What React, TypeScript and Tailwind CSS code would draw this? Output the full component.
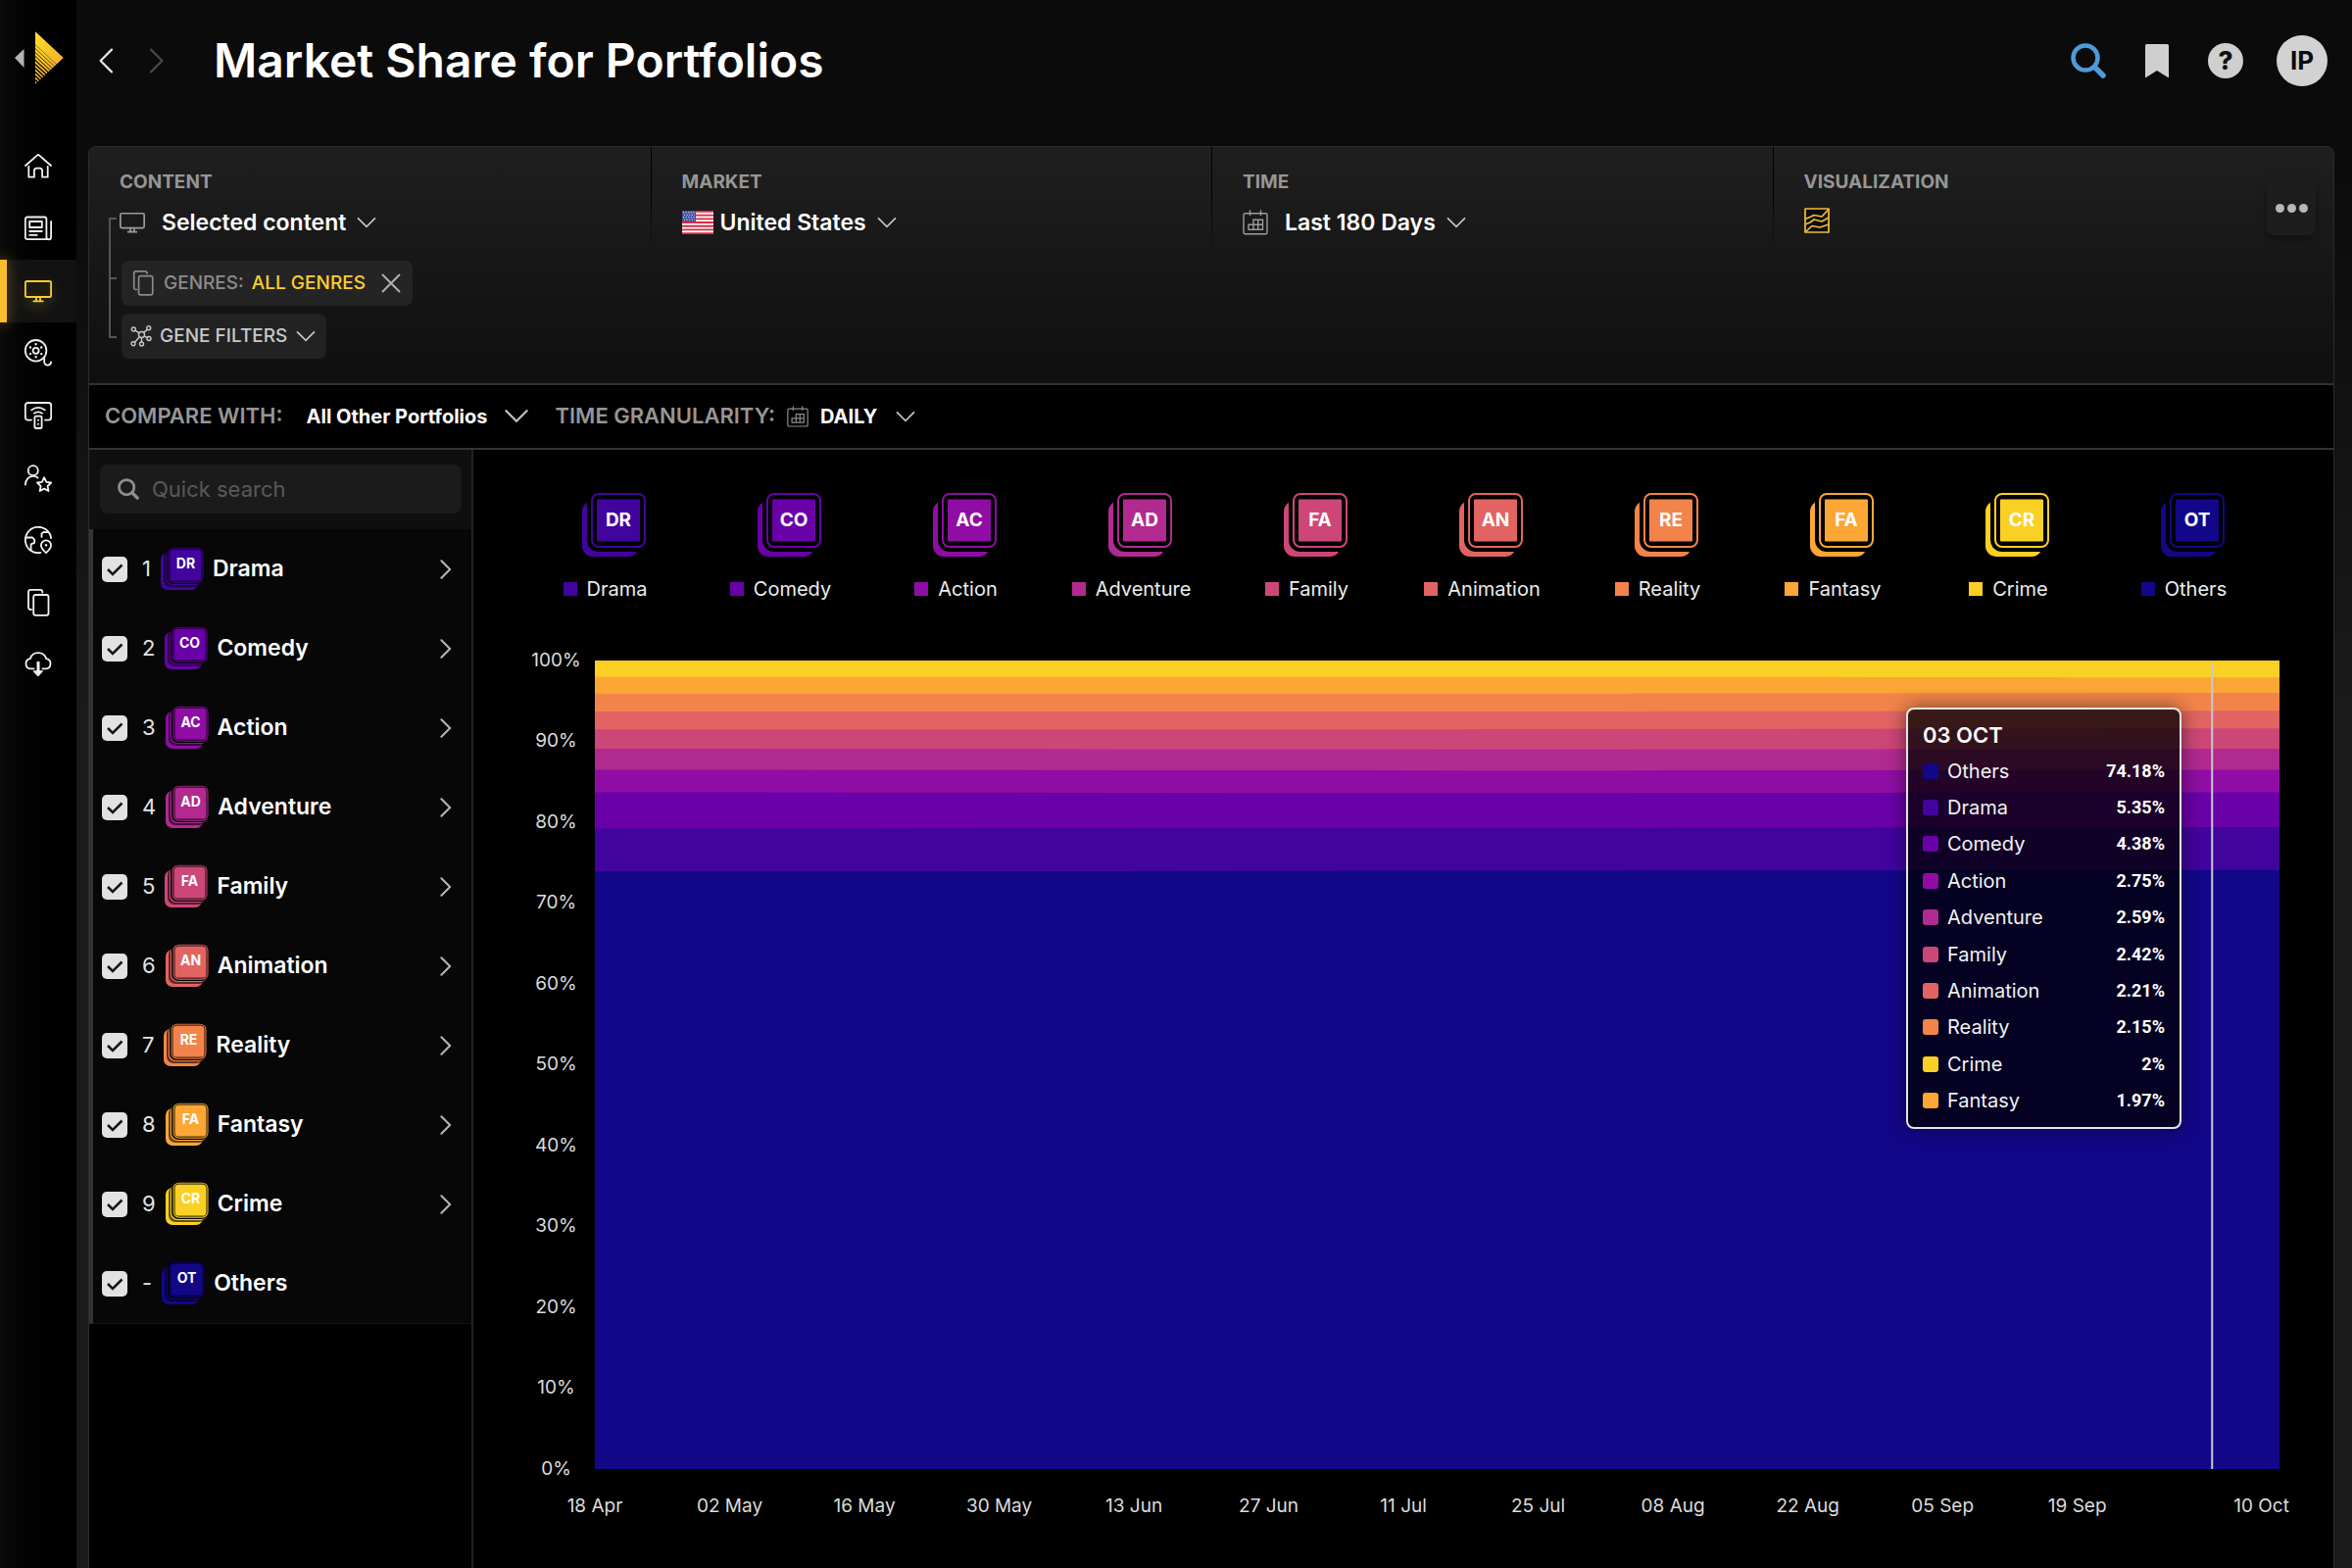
import React from "react";

type Genre = { code: string; name: string; color: string; share: string };

const drama: Genre = { code: "DR", name: "Drama", color: "#41049d", share: "5.35%" };
const comedy: Genre = { code: "CO", name: "Comedy", color: "#6a00a8", share: "4.38%" };
const action: Genre = { code: "AC", name: "Action", color: "#8f0da4", share: "2.75%" };
const adventure: Genre = { code: "AD", name: "Adventure", color: "#b12a90", share: "2.59%" };
const family: Genre = { code: "FA", name: "Family", color: "#cc4778", share: "2.42%" };
const animation: Genre = { code: "AN", name: "Animation", color: "#e16462", share: "2.21%" };
const reality: Genre = { code: "RE", name: "Reality", color: "#f2844b", share: "2.15%" };
const fantasy: Genre = { code: "FA", name: "Fantasy", color: "#fca636", share: "1.97%" };
const crime: Genre = { code: "CR", name: "Crime", color: "#fbd024", share: "2%" };
const others: Genre = { code: "OT", name: "Others", color: "#130789", share: "74.18%" };

const genres = [drama, comedy, action, adventure, family, animation, reality, fantasy, crime, others];
const tooltipRows = [others, drama, comedy, action, adventure, family, animation, reality, crime, fantasy];

// Upper edge of every layer, measured down from 100%: start, middle and end of the period.
const layers: { genre: Genre; top: [number, number, number] }[] = [
  { genre: crime, top: [0, 0, 0] },
  { genre: fantasy, top: [2.0, 2.0, 2.1] },
  { genre: reality, top: [4.1, 4.1, 4.0] },
  { genre: animation, top: [6.3, 6.3, 6.2] },
  { genre: family, top: [8.5, 8.5, 8.4] },
  { genre: adventure, top: [10.9, 11.0, 10.9] },
  { genre: action, top: [13.5, 13.6, 13.5] },
  { genre: comedy, top: [16.3, 16.4, 16.3] },
  { genre: drama, top: [20.8, 20.7, 20.6] },
  { genre: others, top: [26.1, 26.0, 25.9] },
];

const yTicks = ["100%", "90%", "80%", "70%", "60%", "50%", "40%", "30%", "20%", "10%", "0%"];
const xTicks = ["18 Apr", "02 May", "16 May", "30 May", "13 Jun", "27 Jun", "11 Jul", "25 Jul", "08 Aug", "22 Aug", "05 Sep", "19 Sep"];

function LineIcon({ children, className }: { children: React.ReactNode; className?: string }) {
  return (
    <svg
      viewBox="0 0 28 28"
      aria-hidden="true"
      className={className ?? "size-7"}
      fill="none"
      stroke="currentColor"
      strokeWidth="1.8"
      strokeLinecap="round"
      strokeLinejoin="round"
    >
      {children}
    </svg>
  );
}

const Home = () => (
  <LineIcon>
    <path d="M1 13 12.8 2.6a1.8 1.8 0 0 1 2.4 0L27 13" />
    <path d="M4.3 13.8v10.9h5.6v-6.4a2.6 2.6 0 0 1 2.6-2.6h3a2.6 2.6 0 0 1 2.6 2.6v6.4h5.6V13.8" />
  </LineIcon>
);
const News = () => (
  <LineIcon>
    <path d="M24.5 25.2H3a2.2 2.2 0 0 1-2.2-2.2V4.7A2.2 2.2 0 0 1 3 2.5h17.2a2.2 2.2 0 0 1 2.2 2.2V23a2.3 2.3 0 0 0 4.7 0V7" />
    <path d="M5.2 7h12.6v6H5.2zM5.2 17h12.6M5.2 20.8h7.5" />
  </LineIcon>
);
const Monitor = ({ className }: { className?: string }) => (
  <LineIcon className={className}>
    <rect x="0.9" y="4" width="26.2" height="16" rx="1.6" />
    <path d="M12 20v4M16 20v4M9.3 24.4h9.4" />
  </LineIcon>
);
const Reel = () => (
  <LineIcon>
    <circle cx="11.6" cy="11.8" r="10.8" />
    <circle cx="11.6" cy="11.8" r="3" />
    <path strokeWidth="2.4" d="M11.6 5.3v0M11.6 18.3v0M6 8.5v0M17.2 8.5v0M6 15.1v0M17.2 15.1v0" />
    <path d="M20.2 18.8v4.4a3.2 3.2 0 0 0 3.4 3.4c2 0 3.4-1.3 3.5-3.2" />
  </LineIcon>
);
const Remote = () => (
  <LineIcon>
    <path d="M7 18.6H3.5a2.7 2.7 0 0 1-2.7-2.7V3.7A2.7 2.7 0 0 1 3.5 1h21a2.7 2.7 0 0 1 2.7 2.7v12.2a2.7 2.7 0 0 1-2.7 2.7H21" />
    <path d="M7.2 8.4c4.1-3.2 9.5-3.2 13.6 0M10 11.7c2.5-1.7 5.5-1.7 8 0" />
    <rect x="10.4" y="14.6" width="7.2" height="12.4" rx="1.6" />
    <path strokeWidth="2" d="M14 18.8v0M14 22.8v0" />
  </LineIcon>
);
const Talent = () => (
  <LineIcon>
    <circle cx="8.8" cy="6.2" r="5" />
    <path d="M.9 20.5c0-5 3.4-8.6 7.9-8.6 2 0 3.4.5 4.8 1.6" />
    <path d="m20.1 13.2 2.2 4.6 4.9.7-3.6 3.5.9 5-4.4-2.4-4.4 2.4.9-5-3.6-3.5 4.9-.7z" />
  </LineIcon>
);
const Globe = () => (
  <LineIcon>
    <path d="M16.2 27A13.2 13.2 0 1 1 27.1 12" />
    <path d="M1.5 11.5h6.7l2 2.3v3l-3.6 1.5v5.9M24.3 6.2l-4.8-.3-2 1.6v3.4" />
    <path d="M22 27.1c-3-2.8-5.1-5-5.1-7.7a5.1 5.1 0 0 1 10.2 0c0 2.7-2.1 4.9-5.1 7.7z" />
    <path strokeWidth="2.4" d="M22 19.2v0" />
  </LineIcon>
);
const Pages = ({ className }: { className?: string }) => (
  <LineIcon className={className}>
    <rect x="9.2" y="6" width="15.3" height="20.8" rx="2" />
    <path d="M7 21H6a2 2 0 0 1-2-2V2.9A2 2 0 0 1 6 .9h10.3a2 2 0 0 1 2 2V3.5" />
  </LineIcon>
);
const CloudDown = () => (
  <LineIcon>
    <path d="M9.600 18.4H6.200a5.200 5.200 0 0 1-.4-10.300C7 4.500 10.200 2.200 14 2.200s7 2.300 8.200 5.900a5.200 5.200 0 0 1-.4 10.300h-3.400" />
    <path strokeWidth="3" strokeLinecap="butt" d="M14 11v11" />
    <path fill="currentColor" strokeWidth="1" d="M9.5 20.8h9L14 25.8z" />
  </LineIcon>
);
const Gene = () => (
  <svg viewBox="0 0 22 22" aria-hidden="true" className="size-[22px]" fill="none" stroke="currentColor" strokeWidth="1.4">
    <circle cx="11.5" cy="9.5" r="3" />
    <circle cx="3.3" cy="4" r="2" />
    <circle cx="18.7" cy="2.8" r="2" />
    <circle cx="19" cy="13.5" r="2" />
    <circle cx="11.5" cy="19" r="2" />
    <circle cx="3" cy="18.7" r="2" />
    <path d="m5 5.200 4 2.600M13.700 7.400 17.300 4.300M14.200 10.800l3 1.800M11.500 12.500V17M9.400 11.700l-5 5.600" />
  </svg>
);
const Calendar = ({ className }: { className: string }) => (
  <svg viewBox="0 0 26 26" aria-hidden="true" className={className} fill="none" stroke="currentColor" strokeWidth="1.4">
    <rect x="1" y="3.8" width="24" height="21" rx="1.5" />
    <path d="M7.500.5v5.500M18.500.5v5.500M6 20.200v-5h5v-5h9.500v10zM11 15.200h9.500M11 15.200v5M15.700 10.200v10" />
  </svg>
);
const Down = ({ className }: { className: string }) => (
  <svg viewBox="0 0 24 14" aria-hidden="true" className={className} fill="none" stroke="currentColor" strokeWidth="2">
    <path d="m1.500 1.500 10.500 10.500 10.500-10.500" />
  </svg>
);
const Side = ({ left, className }: { left?: boolean; className: string }) => (
  <svg viewBox="0 0 14 24" aria-hidden="true" className={className} fill="none" stroke="currentColor" strokeLinecap="round" strokeLinejoin="round">
    <path d={left ? "M12.500 1.500 2 12l10.500 10.500" : "M1.500 1.500 12 12 1.500 22.500"} />
  </svg>
);
const Lens = ({ className }: { className: string }) => (
  <svg viewBox="0 0 36 36" aria-hidden="true" className={className} fill="none" stroke="currentColor" strokeLinecap="round">
    <circle cx="15" cy="15" r="12.5" strokeWidth="4.5" />
    <path d="m25 25 8 8" strokeWidth="5.5" />
  </svg>
);

function Logo() {
  return (
    <svg viewBox="0 0 50 54" aria-hidden="true" className="h-[54px] w-[50px]">
      <defs>
        <linearGradient id="logo-gold" x1="0" y1="0" x2="0.6" y2="1">
          <stop offset="0" stopColor="#fde12d" />
          <stop offset="1" stopColor="#f5a32c" />
        </linearGradient>
        <clipPath id="logo-shape">
          <path d="M21 0 50 27 21 54z" />
        </clipPath>
      </defs>
      <path d="M0 27 9.500 18v19z" fill="#b4b4b4" />
      <g clipPath="url(#logo-shape)">
        <path d="M21 0 50 27 21 54z" fill="url(#logo-gold)" />
        <g stroke="#080808">
          <path strokeWidth="0.4" d="m21 13.500 29 27" />
          <path strokeWidth="0.6" d="m21 17.500 29 27" />
          <path strokeWidth="0.8" d="m21 21.500 29 27" />
          <path strokeWidth="1" d="m21 25.500 29 27" />
          <path strokeWidth="1.2" d="m21 29.500 29 27" />
          <path strokeWidth="1.3" d="m21 33.500 29 27" />
          <path strokeWidth="1.4" d="m21 37.500 29 27" />
          <path strokeWidth="1.5" d="m21 41.500 29 27" />
          <path strokeWidth="1.6" d="m21 45.500 29 27" />
          <path strokeWidth="1.7" d="m21 49.500 29 27" />
        </g>
      </g>
    </svg>
  );
}

function Flag() {
  return (
    <svg viewBox="0 0 32 24" aria-hidden="true" className="h-6 w-8">
      <clipPath id="flag-edge">
        <rect width="32" height="24" rx="2" />
      </clipPath>
      <g clipPath="url(#flag-edge)">
        <rect width="32" height="24" fill="#f6f6f6" />
        <path stroke="#dd2b45" strokeWidth="1.85" d="M0 .9h32M0 4.600h32M0 8.300h32M0 12h32M0 15.700h32M0 19.400h32M0 23.100h32" />
        <rect width="14" height="11.1" fill="#3f4f9e" />
        <path stroke="#fff" strokeWidth="1.1" strokeDasharray="1.1 1.5" d="M1 1.800h12.500M2 4.300h11M1 6.800h12.500M2 9.300h11" />
      </g>
    </svg>
  );
}

function LegendBadge({ genre }: { genre: Genre }) {
  return (
    <svg viewBox="0 0 66 66" aria-hidden="true" className="size-[66px]">
      <rect x="0" y="8" width="58" height="57" rx="11" fill={genre.color} />
      <rect x="5" y="-4" width="64" height="64" rx="12" fill="#000" />
      <rect x="10" y="1" width="54" height="54" rx="7" fill="none" stroke={genre.color} strokeWidth="2" />
      <rect x="15" y="6.5" width="44" height="43" rx="1" fill={genre.color} />
      <text x="37" y="34" textAnchor="middle" fill="#fff" className="font-['Inter'] text-[19px] font-bold">
        {genre.code}
      </text>
    </svg>
  );
}

function RowBadge({ genre }: { genre: Genre }) {
  return (
    <svg viewBox="0 0 44 45" aria-hidden="true" className="h-[45px] w-11">
      <rect x="0" y="6" width="38" height="38" rx="7" fill={genre.color} />
      <rect x="3" y="4" width="38" height="37" rx="7" fill="#000" fillOpacity="0.6" />
      <rect x="5" y="2" width="38" height="37" rx="7" fill={genre.color} />
      <rect x="6" y="0" width="38" height="38" rx="7" fill="#000" />
      <rect x="7.5" y="0.7" width="36" height="36" rx="6" fill={genre.color} />
      <rect x="9" y="2.2" width="33" height="33" rx="4.5" fill={genre.color} stroke="#000" strokeOpacity="0.7" strokeWidth="1.2" />
      <text x="25.5" y="22" textAnchor="middle" fill="#fff" className="font-['Inter'] text-[14px] font-bold">
        {genre.code}
      </text>
    </svg>
  );
}

function Dropdown({
  id,
  value,
  selectClass,
  className,
  children,
}: {
  id: string;
  value: string;
  selectClass: string;
  className: string;
  children: React.ReactNode;
}) {
  return (
    <span className={className}>
      <select id={id} defaultValue={value} className={selectClass}>
        <option>{value}</option>
      </select>
      {children}
    </span>
  );
}

function Sidebar() {
  const items = [
    { name: "Home", icon: <Home /> },
    { name: "News", icon: <News /> },
    { name: "Monitor", icon: <Monitor /> },
    { name: "Movies", icon: <Reel /> },
    { name: "Platforms", icon: <Remote /> },
    { name: "Talent", icon: <Talent /> },
    { name: "Markets", icon: <Globe /> },
    { name: "Portfolios", icon: <Pages /> },
    { name: "Downloads", icon: <CloudDown /> },
  ];
  return (
    <nav aria-label="Main" className="w-[78px] shrink-0 bg-linear-to-r from-[#0b0b0b] to-black">
      <div className="flex h-[138px] items-start pt-8 pl-[15px]">
        <Logo />
      </div>
      <ul className="grid h-[572px] grid-rows-9">
        {items.map((item) => (
          <li key={item.name} className="flex">
            <a
              href="#"
              aria-label={item.name}
              className={
                item.name === "Monitor"
                  ? "flex flex-1 items-center bg-[#121212] text-[#f9cf2a]"
                  : "flex flex-1 items-center pl-[25px] text-[#f2f2f2]"
              }
            >
              {item.name === "Monitor" && (
                <span className="mr-[18px] h-full w-[7px] bg-[#fbbc2f] shadow-[0_0_14px_2px_rgba(251,188,47,0.3)]" />
              )}
              <span className={item.name === "Monitor" ? "drop-shadow-[0_5px_6px_rgba(249,207,42,0.35)]" : ""}>{item.icon}</span>
            </a>
          </li>
        ))}
      </ul>
    </nav>
  );
}

function Header() {
  return (
    <header className="flex h-[149px] items-start pt-9 pr-[25px] pl-[22px]">
      <div className="flex h-[52px] flex-1 items-center">
        <button type="button" aria-label="Back" className="text-[#e6e6e6]">
          <Side left className="h-[26px] w-4 stroke-2" />
        </button>
        <button type="button" aria-label="Forward" className="ml-9 text-[#484848]">
          <Side className="h-[26px] w-4 stroke-2" />
        </button>
        <h1 className="ml-[50px] text-5xl font-semibold text-white">Market Share for Portfolios</h1>
        <div className="ml-auto flex items-center text-[#cfcfcf]">
          <button type="button" aria-label="Search" className="text-[#4f9bd8]">
            <Lens className="size-9" />
          </button>
          <button type="button" aria-label="Bookmarks" className="ml-10">
            <svg viewBox="0 0 24 35" aria-hidden="true" className="h-[35px] w-6" fill="currentColor">
              <path d="M1.500 0h21A1.500 1.500 0 0 1 24 1.500V34.500L12 27 0 34.500v-33A1.500 1.500 0 0 1 1.500 0z" />
            </svg>
          </button>
          <button type="button" aria-label="Help" className="ml-10 size-9 rounded-full bg-[#cfcfcf] text-[26px] leading-9 font-extrabold text-[#111]">
            ?
          </button>
          <button type="button" aria-label="Account" className="ml-[34px] size-[52px] rounded-full bg-[#d2d2d2] text-[26px] leading-[52px] font-bold text-[#0c0c0c]">
            IP
          </button>
        </div>
      </div>
    </header>
  );
}

const filterLabel = "text-[19px] leading-6 font-bold text-[#969696]";
const filterSelect = "h-10 appearance-none field-sizing-content bg-transparent text-[23px] leading-10 font-semibold text-white";
const filterDropdown = "flex items-center gap-2.5 text-[#c4c4c4]";
const divider = "border-l border-l-black [border-image:linear-gradient(to_bottom,black_20%,transparent_45%)_1]";

function Filters() {
  return (
    <section aria-label="Filters" className="grid min-h-[242px] grid-cols-4 rounded-t-lg border-t border-[#2c2c2c] bg-linear-to-b from-[#1f1f1f] to-[#0f0f0f]">
      <div className="pt-6">
        <label htmlFor="content" className={"block pl-[31px] " + filterLabel}>CONTENT</label>
        <div className="mt-[9px] ml-5 flex gap-[3px]">
          <div className="mt-[15px] mb-[21px] flex w-2 flex-col">
            <div className="flex-1 border-t-2 border-l-2 border-[#555]" />
            <div className="flex-1 border-y-2 border-l-2 border-[#555]" />
          </div>
          <div>
            <div className="flex items-center gap-[17px] text-[#9c9c9c]">
              <Monitor className="size-[26px]" />
              <Dropdown id="content" value="Selected content" selectClass={filterSelect} className={filterDropdown}>
                <Down className="h-3 w-[22px]" />
              </Dropdown>
            </div>
            <div className="mt-[19px] ml-0.5 flex flex-col items-start gap-2">
              <div className="flex h-[46px] items-center rounded-lg bg-[#242424] pr-3 pl-[9px] text-[19px] font-medium text-[#8c8c8c]">
                <Pages className="size-[26px]" />
                <span className="ml-2">GENRES:</span>
                <span className="ml-2 text-[#fccf2f]">ALL GENRES</span>
                <button type="button" aria-label="Remove genres" className="ml-4 text-[#b0b0b0]">
                  <svg viewBox="0 0 20 20" aria-hidden="true" className="size-5" stroke="currentColor" strokeWidth="2">
                    <path d="m1 1 18 18M19 1 1 19" />
                  </svg>
                </button>
              </div>
              <button type="button" className="flex h-[46px] items-center gap-2 rounded-lg bg-[#222] pr-2.5 pl-[9px] text-[19px] font-medium text-[#c8c8c8]">
                <Gene />
                GENE FILTERS
                <Down className="h-3 w-[22px]" />
              </button>
            </div>
          </div>
        </div>
      </div>
      <div className={"pt-6 pl-[31px] " + divider}>
        <label htmlFor="market" className={"block " + filterLabel}>MARKET</label>
        <div className="mt-[9px] flex items-center gap-[7px]">
          <Flag />
          <Dropdown id="market" value="United States" selectClass={filterSelect} className={filterDropdown}>
            <Down className="h-3 w-[22px]" />
          </Dropdown>
        </div>
      </div>
      <div className={"pt-6 pl-[31px] " + divider}>
        <label htmlFor="time" className={"block " + filterLabel}>TIME</label>
        <div className="mt-[9px] flex items-center gap-[17px] text-[#9c9c9c]">
          <Calendar className="size-[26px]" />
          <Dropdown id="time" value="Last 180 Days" selectClass={filterSelect} className={filterDropdown}>
            <Down className="h-3 w-[22px]" />
          </Dropdown>
        </div>
      </div>
      <div className={"flex pt-6 pr-[18px] pl-[31px] " + divider}>
        <div className="flex-1">
          <h2 className={filterLabel}>VISUALIZATION</h2>
          <button type="button" aria-label="Stacked area chart" className="mt-[14px] block">
            <svg viewBox="0 0 26 26" aria-hidden="true" className="size-[26px]" fill="#0c0c14" stroke="#f5bd2f" strokeWidth="1.7" strokeLinejoin="round">
              <rect x="1" y="1" width="24" height="24" />
              <path fill="none" d="M1 11.500 6 9.500 10 7.500 18 9 25 1.500M1 17l5-2 4-3 8 2 7-4M1 25l7-6.500 8 1.500 9-3" />
            </svg>
          </button>
        </div>
        <button type="button" aria-label="More options" className="mt-2.5 flex h-[56px] w-[50px] items-center justify-center gap-[3px] rounded-lg bg-[#1d1d1d] text-[#b8b8b8] shadow-[0_4px_8px_rgba(0,0,0,0.35)]">
          <span className="size-[9px] rounded-full bg-current" />
          <span className="size-[9px] rounded-full bg-current" />
          <span className="size-[9px] rounded-full bg-current" />
        </button>
      </div>
    </section>
  );
}

const barSelect = "h-10 appearance-none field-sizing-content bg-transparent text-xl leading-10 font-bold text-white";

function CompareBar() {
  return (
    <div className="flex h-[68px] items-center border-y-2 border-[#333] bg-black pb-px pl-4">
      <label htmlFor="compare" className="text-[22px] font-semibold text-[#969696]">COMPARE WITH:</label>
      <Dropdown id="compare" value="All Other Portfolios" selectClass={barSelect} className="ml-6 flex items-center gap-[17px] text-[#c4c4c4]">
        <Down className="h-[15px] w-[26px]" />
      </Dropdown>
      <label htmlFor="granularity" className="ml-[26px] text-[22px] font-semibold text-[#969696]">TIME GRANULARITY:</label>
      <span className="ml-3 flex items-center gap-3 text-[#8c8c8c]">
        <Calendar className="size-[22px]" />
        <Dropdown id="granularity" value="DAILY" selectClass={barSelect} className="flex items-center gap-[18px] text-[#c4c4c4]">
          <Down className="h-3 w-[22px]" />
        </Dropdown>
      </span>
    </div>
  );
}

function GenreList() {
  return (
    <aside className="w-[392px] shrink-0 border-r-2 border-[#242424]">
      <div className="bg-[#0f0f0f] pt-[15px] pr-2.5 pb-4 pl-[11px]">
        <label className="flex h-[50px] items-center gap-[13px] rounded-lg bg-[#1b1b1b] pl-[18px] text-[#8f8f8f]">
          <Lens className="size-[22px]" />
          <input type="search" aria-label="Quick search" placeholder="Quick search" className="min-w-0 flex-1 bg-transparent text-[22px] text-white outline-none placeholder:text-[#595959]" />
        </label>
      </div>
      <ul className="border-b border-l-4 border-b-[#141414] border-l-[#333] bg-[#070707]">
        {genres.map((genre, index) => (
          <li key={genre.name} className="flex h-[81px] items-center pr-5 pl-[9px]">
            <label className="flex flex-1 items-center">
              <span className="grid size-[26px] place-items-center">
                <input type="checkbox" defaultChecked className="col-start-1 row-start-1 size-[26px] appearance-none rounded-[5px] bg-[#e2e2e2]" />
                <svg viewBox="0 0 26 26" aria-hidden="true" className="pointer-events-none col-start-1 row-start-1 size-[26px]" fill="none" stroke="#161616" strokeWidth="2.5">
                  <path d="m6 13 5 5 9.500-9.500" />
                </svg>
              </span>
              <span className="ml-[15px] text-[22px] text-[#e4e4e4]">{index === 9 ? "-" : index + 1}</span>
              <span className="ml-2.5">
                <RowBadge genre={genre} />
              </span>
              <span className="ml-[9px] text-[23px] font-semibold text-white">{genre.name}</span>
            </label>
            {index !== 9 && (
              <button type="button" aria-label={"Open " + genre.name} className="text-[#b4b4b4]">
                <Side className="h-5 w-3 stroke-[2.5]" />
              </button>
            )}
          </li>
        ))}
      </ul>
    </aside>
  );
}

function Tooltip() {
  return (
    <div role="tooltip" className="absolute top-12 right-[100px] w-[281px] rounded-lg border-2 border-[#e4e4e4] bg-black/75 px-[15px] pt-2 pb-2 shadow-[0_0_20px_rgba(0,0,0,0.5)]">
      <h3 className="text-[22px] leading-9 font-semibold text-white">03 OCT</h3>
      <table className="h-[374px] w-full">
        <tbody>
          {tooltipRows.map((genre) => (
            <tr key={genre.name}>
              <th scope="row" className="p-0 text-left font-normal">
                <span className="flex items-center gap-[9px] text-xl text-[#f2f2f2]">
                  <span className="size-4 rounded-[3px]" style={{ backgroundColor: genre.color }} />
                  {genre.name}
                </span>
              </th>
              <td className="p-0 text-right font-['Roboto',sans-serif] text-lg font-bold text-white">{genre.share}</td>
            </tr>
          ))}
        </tbody>
      </table>
    </div>
  );
}

function Chart() {
  return (
    <section aria-label="Market share chart" className="min-w-0 flex-1 bg-black pt-11 pr-[55px] pl-[45px]">
      <ul className="mr-2 grid grid-cols-10">
        {genres.map((genre) => (
          <li key={genre.name} className="flex flex-col items-center">
            <span className="ml-[18px]">
              <LegendBadge genre={genre} />
            </span>
            <span className="mt-4 flex items-center gap-2.5 text-xl leading-8 text-[#ececec]">
              <span className="size-[14px]" style={{ backgroundColor: genre.color }} />
              {genre.name}
            </span>
          </li>
        ))}
      </ul>
      <div className="mt-[57px] flex">
        <ul aria-hidden="true" className="flex h-[825px] w-[79px] flex-col justify-between text-[19px] text-[#dcdcdc]">
          {yTicks.map((tick) => (
            <li key={tick} className="flex h-0 items-center justify-center">
              {tick}
            </li>
          ))}
        </ul>
        <div className="min-w-0 flex-1">
          <div className="relative h-[825px]">
            <svg viewBox="0 0 175 100" preserveAspectRatio="none" role="img" aria-label="Daily market share by genre, 18 Apr to 10 Oct" className="size-full">
              {layers.map(({ genre, top }) => (
                <path key={genre.name} fill={genre.color} d={`M0 100V${top[0]}C30 ${top[0]} 60 ${top[1]} 90 ${top[1]}S150 ${top[2]} 175 ${top[2]}V100z`} />
              ))}
              <path d="M168 0.300V100" stroke="#c8c8d0" strokeWidth="2" vectorEffect="non-scaling-stroke" />
            </svg>
            <Tooltip />
          </div>
          <div className="mt-6 flex pb-12 text-[19px] leading-7 text-[#dcdcdc]">
            {xTicks.map((tick) => (
              <div key={tick} className="w-0 flex-[14]">
                <span className="flex w-0 justify-center whitespace-nowrap">{tick}</span>
              </div>
            ))}
            <div className="flex w-0 flex-[7] justify-end whitespace-nowrap">
              <span className="-mr-2.5">10 Oct</span>
            </div>
          </div>
        </div>
      </div>
    </section>
  );
}

export default function App() {
  return (
    <div className="flex min-h-screen bg-[#0b0b0b] font-['Inter',sans-serif]">
      <Sidebar />
      <main className="flex min-w-0 flex-1 flex-col bg-linear-to-b from-[#0b0b0b] from-10% to-[#1a1a1a] to-45%">
        <Header />
        <div className="mr-[18px] ml-3 flex flex-1 flex-col rounded-t-lg border-x border-[#2c2c2c]">
          <Filters />
          <CompareBar />
          <div className="flex flex-1 bg-black">
            <GenreList />
            <Chart />
          </div>
        </div>
      </main>
    </div>
  );
}
